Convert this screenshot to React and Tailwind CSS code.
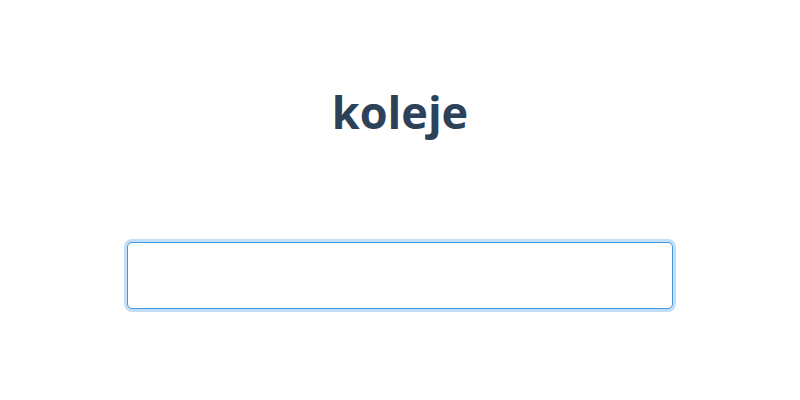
export default function App() {
  return (
    <div className="w-[800px] h-[400px] bg-white flex flex-col items-center font-['Open_Sans',sans-serif]">
      <h1 className="mt-[80px] text-[45px] leading-[64px] font-bold text-[#2d4159]">koleje</h1>
      <input
        type="text"
        className="mt-[98px] w-[546px] h-[67px] rounded-[5px] border border-[#3f9be6] bg-white outline-none ring-[3px] ring-[#c2dff7]"
      />
    </div>
  );
}
